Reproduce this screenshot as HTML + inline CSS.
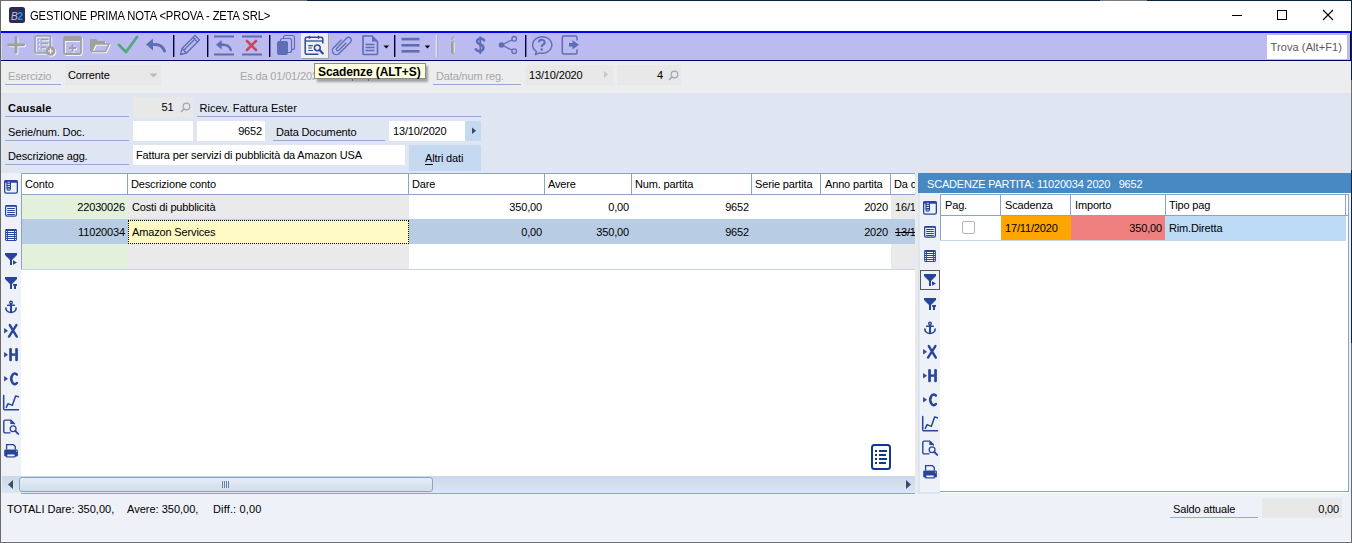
<!DOCTYPE html>
<html><head><meta charset="utf-8"><style>
html,body{margin:0;padding:0;}
body{width:1352px;height:543px;position:relative;overflow:hidden;font-family:"Liberation Sans", sans-serif;font-size:11px;}
#ov{position:absolute;left:0;top:0;}
</style></head><body>
<div style="position:absolute;left:0px;top:0px;width:1352px;height:543px;background:#EEF1F8;"></div><div style="position:absolute;left:1px;top:1px;width:1350px;height:30px;background:#FFFFFF;"></div><div style="position:absolute;left:0px;top:0px;width:307px;height:1px;background:#707070;"></div><div style="position:absolute;left:307px;top:0px;width:793px;height:1px;background:#0B2440;"></div><div style="position:absolute;left:1100px;top:0px;width:47px;height:1px;background:#7A7A7A;"></div><div style="position:absolute;left:1147px;top:0px;width:205px;height:1px;background:#0B2440;"></div><div style="position:absolute;left:1px;top:31px;width:1350px;height:2px;background:#0000FF;"></div><div style="position:absolute;left:1px;top:33px;width:1350px;height:27px;background:#BBBBEF;"></div><div style="position:absolute;left:1350px;top:33px;width:1px;height:28px;background:#00004C;"></div><div style="position:absolute;left:1px;top:33px;width:1px;height:27px;background:#D4D4F6;"></div><div style="position:absolute;left:1px;top:60px;width:1350px;height:1px;background:#000060;"></div><div style="position:absolute;left:1px;top:61px;width:1350px;height:32px;background:#ECEDEF;"></div><div style="position:absolute;left:1px;top:93px;width:1350px;height:80px;background:#DFE6F1;"></div><div style="position:absolute;left:0px;top:0px;width:1px;height:543px;background:#6A6A6A;"></div><div style="position:absolute;left:1351px;top:0px;width:1px;height:80px;background:#0B2440;"></div><div style="position:absolute;left:1351px;top:80px;width:1px;height:90px;background:#6E6E6E;"></div><div style="position:absolute;left:1351px;top:170px;width:1px;height:173px;background:#0B2440;"></div><div style="position:absolute;left:1351px;top:343px;width:1px;height:200px;background:#6A6A6A;"></div><div style="position:absolute;left:0px;top:542px;width:1352px;height:1px;background:#6A6A6A;"></div><div style="position:absolute;left:1px;top:541px;width:1350px;height:1px;background:#F8FAFE;"></div><div style="position:absolute;left:30px;top:10px;line-height:13px;font-size:12px;font-weight:400;color:#000;white-space:pre;letter-spacing:-0.15px;transform:scaleX(0.937);transform-origin:0 0;">GESTIONE PRIMA NOTA &lt;PROVA - ZETA SRL&gt;</div><div style="position:absolute;left:301px;top:33px;width:27px;height:25px;background:#F0F0F0;box-shadow:1px 1px 0 #A0A0A0;"></div><div style="position:absolute;left:1267px;top:35px;width:80px;height:24px;background:#FFFFFF;"></div><div style="position:absolute;left:1270.5px;top:41px;line-height:13px;font-size:11px;font-weight:400;color:#5A5A5A;white-space:pre;letter-spacing:0.1px;">Trova (Alt+F1)</div><div style="position:absolute;left:8px;top:70px;line-height:13px;font-size:11px;font-weight:400;color:#A6A6A6;white-space:pre;letter-spacing:-0.15px;">Esercizio</div><div style="position:absolute;left:5px;top:84px;width:56px;height:1px;background:#93ABD0;"></div><div style="position:absolute;left:65px;top:65px;width:96px;height:20px;background:#E8E8E8;"></div><div style="position:absolute;left:68px;top:69px;line-height:13px;font-size:11px;font-weight:400;color:#000;white-space:pre;letter-spacing:-0.15px;">Corrente</div><div style="position:absolute;left:240px;top:70px;line-height:13px;font-size:11px;font-weight:400;color:#A6A6A6;white-space:pre;letter-spacing:-0.15px;width:74px;overflow:hidden;">Es.da 01/01/2020</div><div style="position:absolute;left:352px;top:79px;width:1px;height:2px;background:#9A9A9A;"></div><div style="position:absolute;left:368px;top:79px;width:1px;height:2px;background:#9A9A9A;"></div><div style="position:absolute;left:436px;top:70px;line-height:13px;font-size:11px;font-weight:400;color:#A6A6A6;white-space:pre;letter-spacing:-0.15px;">Data/num reg.</div><div style="position:absolute;left:433px;top:84px;width:88px;height:1px;background:#93ABD0;"></div><div style="position:absolute;left:525px;top:65px;width:88px;height:20px;background:#E8E8E8;"></div><div style="position:absolute;left:529px;top:69px;line-height:13px;font-size:11px;font-weight:400;color:#000;white-space:pre;letter-spacing:-0.15px;">13/10/2020</div><div style="position:absolute;left:617px;top:65px;width:64px;height:20px;background:#E8E8E8;"></div><div style="position:absolute;right:689px;top:69px;line-height:13px;font-size:11px;font-weight:400;color:#000;white-space:pre;letter-spacing:-0.15px;">4</div><div style="position:absolute;left:317px;top:66px;width:111px;height:16px;background:rgba(0,0,0,0.32);filter:blur(1.3px);"></div><div style="position:absolute;left:314px;top:63px;width:112px;height:16px;background:#FFFFE1;box-sizing:border-box;border:1px solid #8A8A8A;"></div><div style="position:absolute;left:318px;top:65.5px;line-height:13px;font-size:12px;font-weight:700;color:#000;white-space:pre;letter-spacing:-0.1px;">Scadenze (ALT+S)</div><div style="position:absolute;left:8px;top:102px;line-height:13px;font-size:11px;font-weight:700;color:#000;white-space:pre;letter-spacing:0.2px;">Causale</div><div style="position:absolute;left:5px;top:116px;width:124px;height:1px;background:#93ABD0;"></div><div style="position:absolute;left:133px;top:97px;width:60px;height:20px;background:#E8E8E8;"></div><div style="position:absolute;right:1178.5px;top:101px;line-height:13px;font-size:11px;font-weight:400;color:#000;white-space:pre;letter-spacing:-0.15px;">51</div><div style="position:absolute;left:199.5px;top:102px;line-height:13px;font-size:11px;font-weight:400;color:#000;white-space:pre;letter-spacing:0.05px;">Ricev. Fattura Ester</div><div style="position:absolute;left:197px;top:116px;width:284px;height:1px;background:#93ABD0;"></div><div style="position:absolute;left:8px;top:126px;line-height:13px;font-size:11px;font-weight:400;color:#000;white-space:pre;letter-spacing:-0.15px;">Serie/num. Doc.</div><div style="position:absolute;left:5px;top:140px;width:124px;height:1px;background:#93ABD0;"></div><div style="position:absolute;left:133px;top:121px;width:60px;height:20px;background:#FFFFFF;"></div><div style="position:absolute;left:197px;top:121px;width:68px;height:20px;background:#FFFFFF;"></div><div style="position:absolute;right:1090px;top:125px;line-height:13px;font-size:11px;font-weight:400;color:#000;white-space:pre;letter-spacing:-0.15px;">9652</div><div style="position:absolute;left:276px;top:126px;line-height:13px;font-size:11px;font-weight:400;color:#000;white-space:pre;letter-spacing:-0.15px;">Data Documento</div><div style="position:absolute;left:273px;top:140px;width:112px;height:1px;background:#93ABD0;"></div><div style="position:absolute;left:389px;top:121px;width:76px;height:20px;background:#FFFFFF;"></div><div style="position:absolute;left:393px;top:125px;line-height:13px;font-size:11px;font-weight:400;color:#000;white-space:pre;letter-spacing:-0.15px;">13/10/2020</div><div style="position:absolute;left:465px;top:121px;width:16px;height:20px;background:#C5D9F1;"></div><div style="position:absolute;left:8px;top:150px;line-height:13px;font-size:11px;font-weight:400;color:#000;white-space:pre;letter-spacing:-0.15px;">Descrizione agg.</div><div style="position:absolute;left:5px;top:164px;width:124px;height:1px;background:#93ABD0;"></div><div style="position:absolute;left:133px;top:145px;width:272px;height:20px;background:#FFFFFF;"></div><div style="position:absolute;left:136px;top:149px;line-height:13px;font-size:11px;font-weight:400;color:#000;white-space:pre;letter-spacing:-0.15px;">Fattura per servizi di pubblicità da Amazon USA</div><div style="position:absolute;left:409px;top:145px;width:72px;height:26px;background:#C5D9F1;"></div><div style="position:absolute;left:425px;top:152px;line-height:13px;font-size:11px;font-weight:400;color:#000;white-space:pre;letter-spacing:-0.15px;">Altri dati</div><div style="position:absolute;left:425px;top:164px;width:8px;height:1px;background:#000;"></div><div style="position:absolute;left:1px;top:173px;width:20px;height:303px;background:#EEF1F8;"></div><div style="position:absolute;left:21px;top:173px;width:894px;height:303px;background:#FFFFFF;"></div><div style="position:absolute;left:21px;top:173px;width:894px;height:1px;background:#8DA2C4;"></div><div style="position:absolute;left:21px;top:194px;width:894px;height:1px;background:#8DA2C4;"></div><div style="position:absolute;left:21px;top:173px;width:1px;height:97px;background:#8DA2C4;"></div><div style="position:absolute;left:127px;top:174px;width:1px;height:20px;background:#8DA2C4;"></div><div style="position:absolute;left:408px;top:174px;width:1px;height:20px;background:#8DA2C4;"></div><div style="position:absolute;left:544px;top:174px;width:1px;height:20px;background:#8DA2C4;"></div><div style="position:absolute;left:631px;top:174px;width:1px;height:20px;background:#8DA2C4;"></div><div style="position:absolute;left:751px;top:174px;width:1px;height:20px;background:#8DA2C4;"></div><div style="position:absolute;left:820px;top:174px;width:1px;height:20px;background:#8DA2C4;"></div><div style="position:absolute;left:890px;top:174px;width:1px;height:20px;background:#8DA2C4;"></div><div style="position:absolute;left:22px;top:195px;width:106px;height:24px;background:#E2F0DC;"></div><div style="position:absolute;left:128px;top:195px;width:281px;height:24px;background:#EAEAEA;"></div><div style="position:absolute;left:891px;top:195px;width:24px;height:24px;background:#EAEAEA;"></div><div style="position:absolute;left:22px;top:219px;width:893px;height:25px;background:#B8CCE4;"></div><div style="position:absolute;left:128px;top:220px;width:281px;height:24px;background:#FFF9C4;box-sizing:border-box;border:1px dotted #000;"></div><div style="position:absolute;left:22px;top:244px;width:106px;height:25px;background:#E2F0DC;"></div><div style="position:absolute;left:128px;top:244px;width:281px;height:25px;background:#EAEAEA;"></div><div style="position:absolute;left:891px;top:244px;width:24px;height:25px;background:#EAEAEA;"></div><div style="position:absolute;left:21px;top:269px;width:894px;height:1px;background:#C5D5EA;"></div><div style="position:absolute;left:2px;top:476px;width:913px;height:17px;background:linear-gradient(#CBD9E9,#DCE6F2);"></div><div style="position:absolute;left:19px;top:477px;width:414px;height:15px;background:linear-gradient(#E6EDF6,#CFDDEE);box-sizing:border-box;border:1px solid #8BA3C8;border-radius:3px;"></div><div style="position:absolute;left:21px;top:493px;width:894px;height:1px;background:#8FA6CC;"></div><div style="position:absolute;left:915px;top:173px;width:3px;height:320px;background:#EAEAEA;"></div><div style="position:absolute;left:918px;top:173px;width:433px;height:20px;background:#4689C3;"></div><div style="position:absolute;left:918px;top:193px;width:2px;height:300px;background:#DCE6F2;"></div><div style="position:absolute;left:920px;top:193px;width:20px;height:299px;background:#EEF1F8;"></div><div style="position:absolute;left:918px;top:492px;width:22px;height:2px;background:#DCE6F2;"></div><div style="position:absolute;left:940px;top:193px;width:409px;height:300px;background:#FFFFFF;"></div><div style="position:absolute;left:1349px;top:193px;width:2px;height:300px;background:#E8F0FA;"></div><div style="position:absolute;left:940px;top:194px;width:409px;height:1px;background:#8DA2C4;"></div><div style="position:absolute;left:940px;top:215px;width:408px;height:1px;background:#8DA2C4;"></div><div style="position:absolute;left:940px;top:194px;width:1px;height:47px;background:#8DA2C4;"></div><div style="position:absolute;left:1348px;top:194px;width:1px;height:298px;background:#8DA2C4;"></div><div style="position:absolute;left:940px;top:491px;width:409px;height:1px;background:#8DA2C4;"></div><div style="position:absolute;left:1000px;top:195px;width:1px;height:20px;background:#8DA2C4;"></div><div style="position:absolute;left:1070px;top:195px;width:1px;height:20px;background:#8DA2C4;"></div><div style="position:absolute;left:1165px;top:195px;width:1px;height:20px;background:#8DA2C4;"></div><div style="position:absolute;left:1345px;top:195px;width:1px;height:20px;background:#8DA2C4;"></div><div style="position:absolute;left:941px;top:216px;width:59px;height:24px;background:#FFFFFF;"></div><div style="position:absolute;left:1001px;top:216px;width:70px;height:24px;background:#FFA500;"></div><div style="position:absolute;left:1071px;top:216px;width:94px;height:24px;background:#F08080;"></div><div style="position:absolute;left:1165px;top:216px;width:181px;height:24px;background:#BDDBF6;"></div><div style="position:absolute;left:940px;top:240px;width:406px;height:1px;background:#C5D5EA;"></div><div style="position:absolute;left:962px;top:221px;width:13px;height:13px;background:#FFFFFF;box-sizing:border-box;border:1px solid #B4B4B4;border-radius:2px;"></div><div style="position:absolute;left:1170px;top:517px;width:88px;height:1px;background:#93ABD0;"></div><div style="position:absolute;left:1262px;top:498px;width:80px;height:20px;background:#E8E8E8;"></div><div style="position:absolute;left:920px;top:270px;width:20px;height:20px;background:transparent;box-sizing:border-box;border:1px solid #555;"></div><div style="position:absolute;left:0;top:0;width:915px;height:543px;overflow:hidden"><div style="position:absolute;left:25px;top:178px;line-height:13px;font-size:11px;font-weight:400;color:#000;white-space:pre;letter-spacing:-0.15px;">Conto</div><div style="position:absolute;left:131px;top:178px;line-height:13px;font-size:11px;font-weight:400;color:#000;white-space:pre;letter-spacing:-0.15px;">Descrizione conto</div><div style="position:absolute;left:412px;top:178px;line-height:13px;font-size:11px;font-weight:400;color:#000;white-space:pre;letter-spacing:-0.15px;">Dare</div><div style="position:absolute;left:548px;top:178px;line-height:13px;font-size:11px;font-weight:400;color:#000;white-space:pre;letter-spacing:-0.15px;">Avere</div><div style="position:absolute;left:635px;top:178px;line-height:13px;font-size:11px;font-weight:400;color:#000;white-space:pre;letter-spacing:-0.15px;">Num. partita</div><div style="position:absolute;left:755px;top:178px;line-height:13px;font-size:11px;font-weight:400;color:#000;white-space:pre;letter-spacing:-0.15px;">Serie partita</div><div style="position:absolute;left:825px;top:178px;line-height:13px;font-size:11px;font-weight:400;color:#000;white-space:pre;letter-spacing:-0.15px;">Anno partita</div><div style="position:absolute;left:894px;top:178px;line-height:13px;font-size:11px;font-weight:400;color:#000;white-space:pre;letter-spacing:-0.15px;">Da data</div><div style="position:absolute;right:790px;top:201px;line-height:13px;font-size:11px;font-weight:400;color:#000;white-space:pre;letter-spacing:-0.15px;">22030026</div><div style="position:absolute;left:132px;top:201px;line-height:13px;font-size:11px;font-weight:400;color:#000;white-space:pre;letter-spacing:-0.15px;">Costi di pubblicità</div><div style="position:absolute;right:373px;top:201px;line-height:13px;font-size:11px;font-weight:400;color:#000;white-space:pre;letter-spacing:-0.15px;">350,00</div><div style="position:absolute;right:286px;top:201px;line-height:13px;font-size:11px;font-weight:400;color:#000;white-space:pre;letter-spacing:-0.15px;">0,00</div><div style="position:absolute;right:166px;top:201px;line-height:13px;font-size:11px;font-weight:400;color:#000;white-space:pre;letter-spacing:-0.15px;">9652</div><div style="position:absolute;right:27px;top:201px;line-height:13px;font-size:11px;font-weight:400;color:#000;white-space:pre;letter-spacing:-0.15px;">2020</div><div style="position:absolute;left:895px;top:201px;line-height:13px;font-size:11px;font-weight:400;color:#000;white-space:pre;letter-spacing:-0.15px;">16/10/2020</div><div style="position:absolute;right:790px;top:226px;line-height:13px;font-size:11px;font-weight:400;color:#000;white-space:pre;letter-spacing:-0.15px;">11020034</div><div style="position:absolute;left:132px;top:226px;line-height:13px;font-size:11px;font-weight:400;color:#000;white-space:pre;letter-spacing:-0.15px;">Amazon Services</div><div style="position:absolute;right:373px;top:226px;line-height:13px;font-size:11px;font-weight:400;color:#000;white-space:pre;letter-spacing:-0.15px;">0,00</div><div style="position:absolute;right:286px;top:226px;line-height:13px;font-size:11px;font-weight:400;color:#000;white-space:pre;letter-spacing:-0.15px;">350,00</div><div style="position:absolute;right:166px;top:226px;line-height:13px;font-size:11px;font-weight:400;color:#000;white-space:pre;letter-spacing:-0.15px;">9652</div><div style="position:absolute;right:27px;top:226px;line-height:13px;font-size:11px;font-weight:400;color:#000;white-space:pre;letter-spacing:-0.15px;">2020</div><div style="position:absolute;left:895px;top:226px;line-height:13px;font-size:11px;font-weight:400;color:#000;white-space:pre;letter-spacing:-0.15px;"><s>13/10/2020</s></div></div><div style="position:absolute;left:927px;top:178px;line-height:13px;font-size:11px;font-weight:400;color:#FFFFFF;white-space:pre;letter-spacing:-0.2px;">SCADENZE PARTITA: 11020034 2020   9652</div><div style="position:absolute;left:945px;top:199px;line-height:13px;font-size:11px;font-weight:400;color:#000;white-space:pre;letter-spacing:-0.15px;">Pag.</div><div style="position:absolute;left:1005px;top:199px;line-height:13px;font-size:11px;font-weight:400;color:#000;white-space:pre;letter-spacing:-0.15px;">Scadenza</div><div style="position:absolute;left:1075px;top:199px;line-height:13px;font-size:11px;font-weight:400;color:#000;white-space:pre;letter-spacing:-0.15px;">Importo</div><div style="position:absolute;left:1169px;top:199px;line-height:13px;font-size:11px;font-weight:400;color:#000;white-space:pre;letter-spacing:-0.15px;">Tipo pag</div><div style="position:absolute;left:1005px;top:222px;line-height:13px;font-size:11px;font-weight:400;color:#000;white-space:pre;letter-spacing:-0.15px;">17/11/2020</div><div style="position:absolute;right:190px;top:222px;line-height:13px;font-size:11px;font-weight:400;color:#000;white-space:pre;letter-spacing:-0.15px;">350,00</div><div style="position:absolute;left:1169px;top:222px;line-height:13px;font-size:11px;font-weight:400;color:#000;white-space:pre;letter-spacing:-0.15px;">Rim.Diretta</div><div style="position:absolute;left:7px;top:503px;line-height:13px;font-size:11px;font-weight:400;color:#000;white-space:pre;letter-spacing:0px;">TOTALI Dare: 350,00,</div><div style="position:absolute;left:127px;top:503px;line-height:13px;font-size:11px;font-weight:400;color:#000;white-space:pre;letter-spacing:0px;">Avere: 350,00,</div><div style="position:absolute;left:213px;top:503px;line-height:13px;font-size:11px;font-weight:400;color:#000;white-space:pre;letter-spacing:0.15px;">Diff.: 0,00</div><div style="position:absolute;left:1173px;top:503px;line-height:13px;font-size:11px;font-weight:400;color:#000;white-space:pre;letter-spacing:-0.15px;">Saldo attuale</div><div style="position:absolute;right:13px;top:503px;line-height:13px;font-size:11px;font-weight:400;color:#000;white-space:pre;letter-spacing:-0.15px;">0,00</div>
<svg id="ov" width="1352" height="543" viewBox="0 0 1352 543"><rect x="9" y="7" width="16" height="16" rx="2.5" fill="#2D2B55"/><text x="11" y="19.5" font-family="Liberation Sans" font-size="10" font-style="italic" fill="#C8C8D8">B</text><text x="17.5" y="19.5" font-family="Liberation Sans" font-size="10" font-weight="700" fill="#1E9BE0">2</text><line x1="1232" y1="15.5" x2="1242" y2="15.5" stroke="#000" stroke-width="1"/><rect x="1277.5" y="10.5" width="9" height="9" fill="none" stroke="#000" stroke-width="1"/><path d="M1323 10 L1333 20 M1333 10 L1323 20" stroke="#000" stroke-width="1.1"/><path d="M17 38.3 V53.3 M9.7 45.8 H24.7" stroke="#F2F2FF" stroke-width="2.8" stroke-linecap="round"/><path d="M16 37.3 V52.3 M8.7 44.8 H23.7" stroke="#A0A0A0" stroke-width="2.8" stroke-linecap="round"/><g transform="translate(1,1)" stroke="#F2F2FF" fill="none" stroke-width="1.6"><rect x="35" y="36" width="15.5" height="17" rx="1.5"/><path d="M38 39.5h1 M41 39.5h7 M38 43.5h1 M41 43.5h7 M38 47.5h1 M41 47.5h5"/><circle cx="50.5" cy="51" r="4" fill="#F2F2FF"/></g><g transform="translate(0,0)" stroke="#A0A0A0" fill="none" stroke-width="1.6"><rect x="35" y="36" width="15.5" height="17" rx="1.5"/><path d="M38 39.5h1 M41 39.5h7 M38 43.5h1 M41 43.5h7 M38 47.5h1 M41 47.5h5"/><circle cx="50.5" cy="51" r="4" fill="#A0A0A0"/></g><path d="M50.5 48.5v5 M48 51h5" stroke="#FFFFFF" stroke-width="1.2"/><g transform="translate(1,1)"><rect x="64" y="37" width="17" height="17" rx="1.5" fill="none" stroke="#F2F2FF" stroke-width="1.8"/><rect x="64" y="37" width="17" height="4" fill="#F2F2FF"/><path d="M72.5 44.5v7 M69 48h7" stroke="#F2F2FF" stroke-width="2"/></g><g transform="translate(0,0)"><rect x="64" y="37" width="17" height="17" rx="1.5" fill="none" stroke="#A0A0A0" stroke-width="1.8"/><rect x="64" y="37" width="17" height="4" fill="#A0A0A0"/><path d="M72.5 44.5v7 M69 48h7" stroke="#A0A0A0" stroke-width="2"/></g><g transform="translate(1,1)"><path d="M91 39 h5 l2 2 h7 v3 h-9 l-4 7 h-1z" fill="#F2F2FF"/><path d="M91.5 51.5 l3.5 -7.5 h14 l-3.5 7.5z" fill="none" stroke="#F2F2FF" stroke-width="1.6" stroke-linejoin="round"/><path d="M91 39v12" stroke="#F2F2FF" stroke-width="2"/></g><g transform="translate(0,0)"><path d="M91 39 h5 l2 2 h7 v3 h-9 l-4 7 h-1z" fill="#A0A0A0"/><path d="M91.5 51.5 l3.5 -7.5 h14 l-3.5 7.5z" fill="none" stroke="#A0A0A0" stroke-width="1.6" stroke-linejoin="round"/><path d="M91 39v12" stroke="#A0A0A0" stroke-width="2"/></g><path d="M119 45 L126 52 L137 37" fill="none" stroke="#55A67E" stroke-width="2.8" stroke-linecap="round" stroke-linejoin="round"/><g transform="translate(146,38.5) scale(1)"><path d="M0 6 L7 0 V12z" fill="#5F6DB5"/><path d="M6 6 H9 C13 6 17 8 18.5 12.5" fill="none" stroke="#5F6DB5" stroke-width="3" stroke-linecap="round"/></g><rect x="173" y="35" width="1.4" height="22" fill="#00004C"/><g fill="none" stroke="#5F6DB5" stroke-width="1.3" stroke-linejoin="round"><path d="M180.5 54.5 L182 48.5 L195 35.5 L199.5 40 L186.5 53z"/><path d="M182 48.5 L186.5 53 M193 37.5 L197.5 42 M184 50 L195.5 38.5"/></g><rect x="207" y="35" width="1.4" height="22" fill="#00004C"/><rect x="214" y="35.5" width="20" height="2" fill="#5F6DB5"/><rect x="214" y="53.5" width="20" height="2" fill="#5F6DB5"/><g transform="translate(216,40) scale(0.8)"><path d="M0 6 L7 0 V12z" fill="#5F6DB5"/><path d="M6 6 H9 C13 6 17 8 18.5 12.5" fill="none" stroke="#5F6DB5" stroke-width="3" stroke-linecap="round"/></g><rect x="242" y="35.5" width="20" height="2" fill="#5F6DB5"/><rect x="242" y="53.5" width="20" height="2" fill="#5F6DB5"/><path d="M247 41 L256 50 M256 41 L247 50" stroke="#C8485A" stroke-width="2.6" stroke-linecap="round"/><rect x="269" y="35" width="1.4" height="22" fill="#00004C"/><g fill="none" stroke="#5F6DB5" stroke-width="1.2"><rect x="283.5" y="35.5" width="11" height="14" rx="2"/><rect x="280.5" y="38.5" width="11" height="14" rx="2" fill="#BBBBEF"/></g><rect x="277" y="41" width="11" height="14" rx="2" fill="#5F6DB5"/><g fill="none" stroke="#2F4A9C" stroke-width="1.5"><path d="M318.5 54.3 H306.7 a1.5 1.5 0 0 1 -1.5 -1.5 V38.7 a1.5 1.5 0 0 1 1.5 -1.5 H321.3 a1.5 1.5 0 0 1 1.5 1.5 V43.5"/><path d="M305.2 41 H322.8" stroke-width="1.3"/><path d="M309.5 35.8v3 M318.5 35.8v3" stroke-width="1.4"/><path d="M308.3 45.6h4.6 M308.3 48h3.6 M308.3 50.5h4.6" stroke-width="1.2"/><circle cx="317.3" cy="47.8" r="2.9"/><path d="M319.6 50.1 L322.8 53.4" stroke-width="2.2" stroke-linecap="round"/></g><path d="M1.5 -4 V6 A1.5 1.5 0 0 1 -1.5 6 V-8 A2.75 2.75 0 0 1 4 -8 V8 A4 4 0 0 1 -4 8 V-3" transform="translate(342,45) rotate(45)" fill="none" stroke="#5F6DB5" stroke-width="1.3" stroke-linecap="round"/><g fill="none" stroke="#5F6DB5" stroke-width="1.6" stroke-linejoin="round"><path d="M363 36 H372 L377.5 41.5 V53.5 a1 1 0 0 1 -1 1 H364 a1 1 0 0 1 -1 -1z"/><path d="M365.5 44.5h9 M365.5 47.5h9 M365.5 50.5h9"/></g><path d="M372 36 L377.5 41.5 H372z" fill="#5F6DB5"/><path d="M383.5 45.5 h5.5 l-2.75 3z" fill="#000"/><rect x="394" y="35" width="1.4" height="22" fill="#00004C"/><g fill="#5F6DB5"><rect x="401.5" y="37.8" width="18" height="2.6"/><rect x="401.5" y="44" width="18" height="2.6"/><rect x="401.5" y="50" width="18" height="2.6"/></g><path d="M424.7 45.5 h5.5 l-2.75 3z" fill="#000"/><rect x="435.8" y="35" width="1.4" height="22" fill="#F4F4F4"/><rect x="436.8" y="35" width="0.8" height="22" fill="#A0A0A0"/><circle cx="453" cy="38.3" r="1.8" fill="#A8A8A8"/><rect x="451" y="41.2" width="3.8" height="12.6" rx="1.9" fill="#9C9C9C"/><rect x="453.6" y="42" width="1.3" height="11" rx="0.6" fill="#F4F4F4" opacity="0.8"/><circle cx="454" cy="38.8" r="0.9" fill="#F4F4F4" opacity="0.7"/><path d="M484 40.3 C483 38.8 480.5 38.3 478.8 39 C476.5 39.9 476.6 42.6 478.6 43.6 L481.6 45 C484 46.2 484.2 49.6 481.6 50.7 C479.6 51.5 477 51 475.8 49.3" fill="none" stroke="#5F6DB5" stroke-width="2.6" stroke-linecap="round"/><path d="M480.3 36.3 V54" stroke="#5F6DB5" stroke-width="1.8"/><g fill="none" stroke="#5F6DB5" stroke-width="1.3"><circle cx="514.2" cy="38.8" r="2.3"/><circle cx="514.2" cy="51.2" r="2.3"/><path d="M502 45 L512 39.8 M502 45 L512 50.2"/></g><circle cx="501.5" cy="45" r="2.8" fill="#5F6DB5"/><rect x="525" y="35" width="1.4" height="22" fill="#00004C"/><path d="M536.5 51.6 A9.6 8.2 0 1 1 539.6 52.9 L535.3 54.6z" fill="none" stroke="#5F6DB5" stroke-width="1.4" stroke-linejoin="round"/><path d="M539 42.3 a2.8 2.6 0 1 1 4 2.4 c-1 0.6 -1.3 1 -1.3 2.2" fill="none" stroke="#5F6DB5" stroke-width="2"/><circle cx="541.7" cy="49.5" r="1.2" fill="#5F6DB5"/><path d="M577 40.5 V37.5 a1.5 1.5 0 0 0 -1.5 -1.5 H563.8 a1.5 1.5 0 0 0 -1.5 1.5 V52.5 a1.5 1.5 0 0 0 1.5 1.5 H575.5 a1.5 1.5 0 0 0 1.5 -1.5 V49.5" fill="none" stroke="#5F6DB5" stroke-width="1.5"/><path d="M569 43 h3.5 v-2.8 l6.5 4.6 l-6.5 4.6 v-2.8 h-3.5z" fill="#5F6DB5"/><path d="M149.5 73.5 h8 l-4 4z" fill="#B8BCC4"/><path d="M604 71 v7 l4 -3.5z" fill="#C4C8D0"/><g fill="none" stroke="#A0A8B8" stroke-width="1.2"><circle cx="674.5" cy="74.5" r="3.3"/><path d="M672.2 76.8 L669 80" stroke-width="1.6"/></g><g fill="none" stroke="#A0A8B8" stroke-width="1.2"><circle cx="186.5" cy="106.5" r="3.3"/><path d="M184.2 108.8 L181 112" stroke-width="1.6"/></g><path d="M472 127.5 v6.5 l4 -3.25z" fill="#3C4A64"/><path d="M8 484.5 l5 -4.5 v9z" fill="#3E4A6A"/><path d="M911 484.5 l-5 -4.5 v9z" fill="#3E4A6A"/><rect x="222" y="481" width="1" height="7" fill="#6C84AC"/><rect x="224" y="481" width="1" height="7" fill="#6C84AC"/><rect x="226" y="481" width="1" height="7" fill="#6C84AC"/><rect x="228" y="481" width="1" height="7" fill="#6C84AC"/><rect x="872" y="445" width="18" height="24" rx="2.5" fill="#FFFFFF" stroke="#0E3A8A" stroke-width="2"/><rect x="875" y="450" width="2" height="2" fill="#0E3A8A"/><rect x="879" y="450" width="8" height="2" fill="#0E3A8A"/><rect x="875" y="454" width="2" height="2" fill="#0E3A8A"/><rect x="879" y="454" width="7" height="2" fill="#0E3A8A"/><rect x="875" y="458" width="2" height="2" fill="#0E3A8A"/><rect x="879" y="458" width="8" height="2" fill="#0E3A8A"/><rect x="875" y="462" width="2" height="2" fill="#0E3A8A"/><rect x="879" y="462" width="7" height="2" fill="#0E3A8A"/><g transform="translate(2,178)"><rect x="2.65" y="2.65" width="12.7" height="12.5" rx="1.6" fill="none" stroke="#28449A" stroke-width="1.3"/><rect x="2.3" y="2.2" width="13.4" height="2.6" rx="1" fill="#28449A"/><rect x="4.4" y="3" width="4.6" height="9.8" rx="2" fill="#28449A"/><rect x="5.6" y="3.6" width="2.2" height="1.6" fill="#9AA6CF"/><rect x="5.6" y="10.2" width="2.2" height="1.6" fill="#9AA6CF"/><rect x="5.6" y="5.9" width="2.4" height="0.9" fill="#FFFFFF"/><rect x="5.6" y="8" width="2.4" height="0.9" fill="#FFFFFF"/></g><g transform="translate(2,202)"><rect x="3.6" y="3.6" width="10.8" height="10.6" rx="1.4" fill="none" stroke="#28449A" stroke-width="1.2"/><rect x="3.2" y="3.2" width="11.6" height="1.6" rx="0.8" fill="#28449A"/><path d="M5.2 6.5H12.8 M5.2 8.5H12.8 M5.2 10.5H12.8 M5.2 12.5H12.8" stroke="#28449A" stroke-width="1"/></g><g transform="translate(2,226)"><rect x="3.1" y="3.1" width="11.8" height="11.8" rx="1.4" fill="#28449A"/><rect x="4.2" y="5" width="0.9" height="1" fill="#FFFFFF"/><rect x="6" y="5" width="6" height="1" fill="#FFFFFF"/><rect x="12.9" y="5" width="0.9" height="1" fill="#FFFFFF"/><rect x="4.2" y="7" width="0.9" height="1" fill="#FFFFFF"/><rect x="6" y="7" width="6" height="1" fill="#FFFFFF"/><rect x="12.9" y="7" width="0.9" height="1" fill="#FFFFFF"/><rect x="4.2" y="9" width="0.9" height="1" fill="#FFFFFF"/><rect x="6" y="9" width="6" height="1" fill="#FFFFFF"/><rect x="12.9" y="9" width="0.9" height="1" fill="#FFFFFF"/><rect x="4.2" y="11" width="0.9" height="1" fill="#FFFFFF"/><rect x="6" y="11" width="6" height="1" fill="#FFFFFF"/><rect x="12.9" y="11" width="0.9" height="1" fill="#FFFFFF"/><rect x="4.2" y="13" width="0.9" height="1" fill="#FFFFFF"/><rect x="6" y="13" width="6" height="1" fill="#FFFFFF"/><rect x="12.9" y="13" width="0.9" height="1" fill="#FFFFFF"/></g><g transform="translate(2,250)"><path d="M3 3H15V5L10 10V15H8V10L3 5z" fill="#28449A"/><path d="M11 10.2L15 12.5L11 14.8z" fill="#28449A"/></g><g transform="translate(2,274)"><path d="M3 3H15V5L10 10V15H8V10L3 5z" fill="#28449A"/><path d="M11.1 10H15V11.6L14 12.2V15H12V12.2L11.1 11.6z" fill="#28449A"/></g><g transform="translate(2,298)"><circle cx="9" cy="4.6" r="1.35" fill="none" stroke="#28449A" stroke-width="1.3"/><rect x="5" y="6.6" width="8" height="1.5" rx="0.7" fill="#28449A"/><rect x="8" y="5.8" width="2" height="8.5" fill="#28449A"/><path d="M3.9 10.2 A5.1 4.2 0 0 0 14.1 10.2" fill="none" stroke="#28449A" stroke-width="1.7" stroke-linecap="round"/></g><g transform="translate(2,322)"><path d="M2.1 6.1L6 8.8L2.1 11.6z" fill="#28449A"/><path d="M7.8 3.1L14.8 14.6 M14.4 3.1L7 14.6" stroke="#28449A" stroke-width="2.4" stroke-linecap="round"/></g><g transform="translate(2,346)"><path d="M2.1 6.1L6 8.8L2.1 11.6z" fill="#28449A"/><rect x="7.2" y="2" width="2.7" height="13.2" rx="1.3" fill="#28449A"/><rect x="13.2" y="2" width="2.7" height="13.2" rx="1.3" fill="#28449A"/><rect x="9" y="7.4" width="4.5" height="2.4" fill="#28449A"/></g><g transform="translate(2,370)"><path d="M2.1 6.1L6 8.8L2.1 11.6z" fill="#28449A"/><path d="M14.9 4.6 A3.4 5.4 0 1 0 14.9 13.0" fill="none" stroke="#28449A" stroke-width="2.5" stroke-linecap="round"/></g><g transform="translate(2,394)"><path d="M1.7 1.5V14.5a1.3 1.3 0 0 0 1.3 1.3H16.5" fill="none" stroke="#28449A" stroke-width="1.5" stroke-linecap="round"/><path d="M4.3 13.4L6.1 9.6L10.3 11.4L13.6 1.9L16.4 2.7" fill="none" stroke="#28449A" stroke-width="1.5" stroke-linecap="round" stroke-linejoin="round"/></g><g transform="translate(2,418)"><path d="M8.5 14.9H3.2a1.4 1.4 0 0 1 -1.4 -1.4V3.5a1.4 1.4 0 0 1 1.4 -1.4H8.6L12.3 5.6V6.6" fill="none" stroke="#28449A" stroke-width="1.4" stroke-linejoin="round"/><path d="M8.3 2L12.6 6H8.3z" fill="#28449A"/><circle cx="11.1" cy="10.8" r="2.9" fill="none" stroke="#28449A" stroke-width="1.3"/><path d="M13.2 12.9L16.2 15.9" stroke="#28449A" stroke-width="1.9" stroke-linecap="round"/></g><g transform="translate(2,442)"><path d="M4.6 7.6V2.7H11.4L13.3 4.6V7.6" fill="none" stroke="#28449A" stroke-width="1.3"/><rect x="2.2" y="7.4" width="13.7" height="7.2" rx="1.3" fill="#28449A"/><rect x="4.1" y="11.5" width="9.5" height="4.1" rx="1.2" fill="#28449A"/><rect x="5.3" y="12.5" width="7.3" height="1.8" fill="#F2F4FA"/><rect x="14" y="8.6" width="0.9" height="1.3" fill="#B8C2E0"/></g><g transform="translate(921,199)"><rect x="2.65" y="2.65" width="12.7" height="12.5" rx="1.6" fill="none" stroke="#28449A" stroke-width="1.3"/><rect x="2.3" y="2.2" width="13.4" height="2.6" rx="1" fill="#28449A"/><rect x="4.4" y="3" width="4.6" height="9.8" rx="2" fill="#28449A"/><rect x="5.6" y="3.6" width="2.2" height="1.6" fill="#9AA6CF"/><rect x="5.6" y="10.2" width="2.2" height="1.6" fill="#9AA6CF"/><rect x="5.6" y="5.9" width="2.4" height="0.9" fill="#FFFFFF"/><rect x="5.6" y="8" width="2.4" height="0.9" fill="#FFFFFF"/></g><g transform="translate(921,223)"><rect x="3.6" y="3.6" width="10.8" height="10.6" rx="1.4" fill="none" stroke="#28449A" stroke-width="1.2"/><rect x="3.2" y="3.2" width="11.6" height="1.6" rx="0.8" fill="#28449A"/><path d="M5.2 6.5H12.8 M5.2 8.5H12.8 M5.2 10.5H12.8 M5.2 12.5H12.8" stroke="#28449A" stroke-width="1"/></g><g transform="translate(921,247)"><rect x="3.1" y="3.1" width="11.8" height="11.8" rx="1.4" fill="#28449A"/><rect x="4.2" y="5" width="0.9" height="1" fill="#FFFFFF"/><rect x="6" y="5" width="6" height="1" fill="#FFFFFF"/><rect x="12.9" y="5" width="0.9" height="1" fill="#FFFFFF"/><rect x="4.2" y="7" width="0.9" height="1" fill="#FFFFFF"/><rect x="6" y="7" width="6" height="1" fill="#FFFFFF"/><rect x="12.9" y="7" width="0.9" height="1" fill="#FFFFFF"/><rect x="4.2" y="9" width="0.9" height="1" fill="#FFFFFF"/><rect x="6" y="9" width="6" height="1" fill="#FFFFFF"/><rect x="12.9" y="9" width="0.9" height="1" fill="#FFFFFF"/><rect x="4.2" y="11" width="0.9" height="1" fill="#FFFFFF"/><rect x="6" y="11" width="6" height="1" fill="#FFFFFF"/><rect x="12.9" y="11" width="0.9" height="1" fill="#FFFFFF"/><rect x="4.2" y="13" width="0.9" height="1" fill="#FFFFFF"/><rect x="6" y="13" width="6" height="1" fill="#FFFFFF"/><rect x="12.9" y="13" width="0.9" height="1" fill="#FFFFFF"/></g><g transform="translate(921,271)"><path d="M3 3H15V5L10 10V15H8V10L3 5z" fill="#28449A"/><path d="M11 10.2L15 12.5L11 14.8z" fill="#28449A"/></g><g transform="translate(921,295)"><path d="M3 3H15V5L10 10V15H8V10L3 5z" fill="#28449A"/><path d="M11.1 10H15V11.6L14 12.2V15H12V12.2L11.1 11.6z" fill="#28449A"/></g><g transform="translate(921,319)"><circle cx="9" cy="4.6" r="1.35" fill="none" stroke="#28449A" stroke-width="1.3"/><rect x="5" y="6.6" width="8" height="1.5" rx="0.7" fill="#28449A"/><rect x="8" y="5.8" width="2" height="8.5" fill="#28449A"/><path d="M3.9 10.2 A5.1 4.2 0 0 0 14.1 10.2" fill="none" stroke="#28449A" stroke-width="1.7" stroke-linecap="round"/></g><g transform="translate(921,343)"><path d="M2.1 6.1L6 8.8L2.1 11.6z" fill="#28449A"/><path d="M7.8 3.1L14.8 14.6 M14.4 3.1L7 14.6" stroke="#28449A" stroke-width="2.4" stroke-linecap="round"/></g><g transform="translate(921,367)"><path d="M2.1 6.1L6 8.8L2.1 11.6z" fill="#28449A"/><rect x="7.2" y="2" width="2.7" height="13.2" rx="1.3" fill="#28449A"/><rect x="13.2" y="2" width="2.7" height="13.2" rx="1.3" fill="#28449A"/><rect x="9" y="7.4" width="4.5" height="2.4" fill="#28449A"/></g><g transform="translate(921,391)"><path d="M2.1 6.1L6 8.8L2.1 11.6z" fill="#28449A"/><path d="M14.9 4.6 A3.4 5.4 0 1 0 14.9 13.0" fill="none" stroke="#28449A" stroke-width="2.5" stroke-linecap="round"/></g><g transform="translate(921,415)"><path d="M1.7 1.5V14.5a1.3 1.3 0 0 0 1.3 1.3H16.5" fill="none" stroke="#28449A" stroke-width="1.5" stroke-linecap="round"/><path d="M4.3 13.4L6.1 9.6L10.3 11.4L13.6 1.9L16.4 2.7" fill="none" stroke="#28449A" stroke-width="1.5" stroke-linecap="round" stroke-linejoin="round"/></g><g transform="translate(921,439)"><path d="M8.5 14.9H3.2a1.4 1.4 0 0 1 -1.4 -1.4V3.5a1.4 1.4 0 0 1 1.4 -1.4H8.6L12.3 5.6V6.6" fill="none" stroke="#28449A" stroke-width="1.4" stroke-linejoin="round"/><path d="M8.3 2L12.6 6H8.3z" fill="#28449A"/><circle cx="11.1" cy="10.8" r="2.9" fill="none" stroke="#28449A" stroke-width="1.3"/><path d="M13.2 12.9L16.2 15.9" stroke="#28449A" stroke-width="1.9" stroke-linecap="round"/></g><g transform="translate(921,463)"><path d="M4.6 7.6V2.7H11.4L13.3 4.6V7.6" fill="none" stroke="#28449A" stroke-width="1.3"/><rect x="2.2" y="7.4" width="13.7" height="7.2" rx="1.3" fill="#28449A"/><rect x="4.1" y="11.5" width="9.5" height="4.1" rx="1.2" fill="#28449A"/><rect x="5.3" y="12.5" width="7.3" height="1.8" fill="#F2F4FA"/><rect x="14" y="8.6" width="0.9" height="1.3" fill="#B8C2E0"/></g></svg>
</body></html>
